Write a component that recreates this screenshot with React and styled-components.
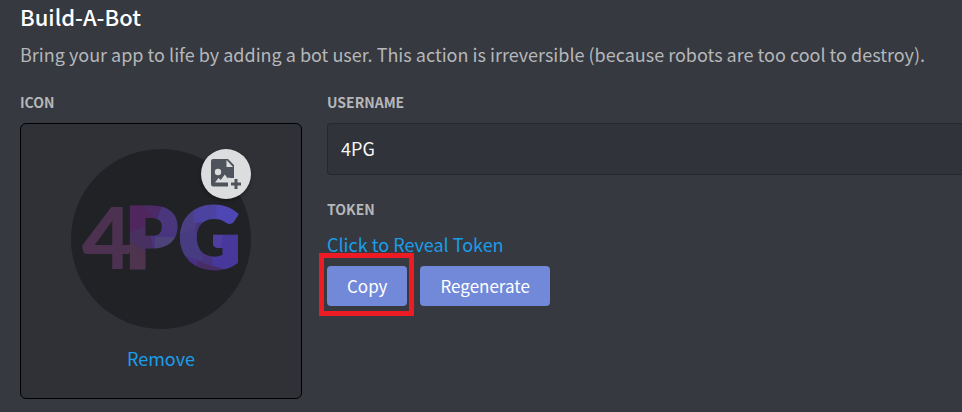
import React from "react";
import styled, { createGlobalStyle } from "styled-components";

const GlobalStyle = createGlobalStyle`
  *, *::before, *::after { box-sizing: border-box; }
  body {
    margin: 0;
    background: #36393f;
    color: #fff;
    font-family: "Noto Sans CJK SC", "Noto Sans", sans-serif;
    font-size: 18px;
    line-height: 24px;
  }
`;

const Page = styled.main`
  padding: 3px 0 12px 20px;
  overflow: hidden;
`;

const Title = styled.h1`
  margin: 0;
  font-size: 22px;
  font-weight: 500;
  line-height: 26px;
`;

const Description = styled.p`
  margin: 13px 0 28px;
  color: #b5b7ba;
  white-space: nowrap;
`;

const Columns = styled.div`
  display: grid;
  grid-template-columns: 282px 1fr;
  column-gap: 25px;
`;

const Label = styled.label`
  display: block;
  margin-bottom: 12px;
  color: #b5b7ba;
  font-size: 14px;
  font-weight: 700;
  line-height: 17px;
  text-transform: uppercase;
`;

const IconCard = styled.div`
  display: flex;
  flex-direction: column;
  align-items: center;
  gap: 17px;
  padding: 25px 0 28px;
  border: 1px solid #000;
  border-radius: 6px;
  background: #303136;
`;

const Avatar = styled.div`
  position: relative;
  width: 180px;
  height: 180px;
  border-radius: 50%;
  background: #212225;

  > svg { display: block; }
`;

const UploadButton = styled.button`
  position: absolute;
  top: 0;
  right: 0;
  width: 50px;
  height: 50px;
  padding: 0;
  border: 0;
  border-radius: 50%;
  background: #dcddde;
  box-shadow: 0 2px 4px rgba(0, 0, 0, 0.3);
  cursor: pointer;

  svg { display: block; }
`;

const TextLink = styled.a`
  color: #1b9de9;
  text-decoration: none;
`;

const TextInput = styled.input`
  display: block;
  width: 100%;
  height: 52px;
  margin-bottom: 26px;
  padding: 0 13px 2px;
  border: 1px solid #26282c;
  border-right: 0;
  border-radius: 4px 0 0 4px;
  background: #303339;
  color: #f6f6f7;
  font: inherit;
  outline: none;
`;

const TokenRow = styled.div`
  display: flex;
  padding-top: 2px;
`;

const Actions = styled.div`
  display: flex;
  gap: 13px;
  margin-top: 10px;
`;

const Button = styled.button`
  height: 40px;
  padding: 0 20px;
  border: 0;
  border-radius: 4px;
  background: #7289da;
  color: #fff;
  font: inherit;
  font-size: 17px;
  cursor: pointer;
`;

const Highlight = styled.div`
  position: relative;
  display: flex;

  &::after {
    content: "";
    position: absolute;
    inset: -13px -7px -10px -8px;
    border: 5px solid #ed1c24;
    pointer-events: none;
  }
`;

const facets = [
  ["#4c3150", "0,50 57,50 57,130 0,130"],
  ["#50265f", "57,50 70,50 90,74 57,90"],
  ["#4b2a67", "68,50 98,50 88,76"],
  ["#49367c", "94,50 110,50 110,88 84,74"],
  ["#4d4378", "84,88 110,88 110,112 84,112"],
  ["#483060", "57,84 78,76 84,112 57,96"],
  ["#4f3450", "57,92 78,104 78,130 57,130"],
  ["#4b3e83", "109,50 128,50 124,82 109,92"],
  ["#4c42a0", "124,50 150,50 148,72 122,74"],
  ["#4e46b2", "146,50 172,50 172,84 145,68"],
  ["#473c82", "109,86 124,80 132,112 109,108"],
  ["#493083", "109,106 132,112 140,134 109,134"],
  ["#48389c", "138,84 172,84 172,130 142,118"],
  ["#472d66", "126,112 172,126 172,134 126,134"],
  ["#4f3e9f", "134,84 152,84 150,106 134,98"],
];

const Logo = () => (
  <svg width="180" height="180" viewBox="0 0 180 180" role="img" aria-label="4PG">
    <defs>
      <mask id="logo-text" maskUnits="userSpaceOnUse" x="0" y="0" width="180" height="180">
        <g fill="#fff" stroke="#fff" fontFamily="Lato" fontWeight="900">
          <text x="11" y="120" fontSize="86" strokeWidth="0">4</text>
          <text x="54" y="119" fontSize="84" strokeWidth="3">P</text>
          <text x="108" y="119" fontSize="84" strokeWidth="4">G</text>
        </g>
      </mask>
    </defs>
    <g mask="url(#logo-text)">
      <rect width="180" height="180" fill="#49357f" />
      {facets.map(([fill, points]) => (
        <polygon key={points} fill={fill} points={points} />
      ))}
    </g>
  </svg>
);

const ImageAddIcon = () => (
  <svg width="50" height="50" viewBox="0 0 50 50" aria-hidden="true">
    <path
      fill="#4f545c"
      d="M12 10h15l6 6v13h-4v4h-2v4.500H12.500a2.500 2.500 0 0 1-2.500-2.500V12a2 2 0 0 1 2-2z"
    />
    <g fill="#dcddde">
      <path d="M25.500 11v7h6.500z" />
      <circle cx="17" cy="23" r="3.200" />
      <path d="M14 33.500l3.500-4.500 2.300 2 4-5.500 3 4 1.200-1.500 1.500 2.500v3z" />
    </g>
    <path fill="#4f545c" d="M33.500 30h3v3.500H40v3h-3.500V40h-3v-3.500H30v-3h3.500z" />
  </svg>
);

export default function App() {
  return (
    <>
      <GlobalStyle />
      <Page>
        <Title>Build-A-Bot</Title>
        <Description>
          Bring your app to life by adding a bot user. This action is irreversible (because robots are too cool to destroy).
        </Description>
        <Columns>
          <section>
            <Label as="div">Icon</Label>
            <IconCard>
              <Avatar>
                <Logo />
                <UploadButton type="button" aria-label="Upload icon"><ImageAddIcon /></UploadButton>
              </Avatar>
              <TextLink href="#remove">Remove</TextLink>
            </IconCard>
          </section>
          <section>
            <Label htmlFor="username">Username</Label>
            <TextInput id="username" type="text" defaultValue="4PG" />
            <Label as="div">Token</Label>
            <TokenRow>
              <TextLink href="#token">Click to Reveal Token</TextLink>
            </TokenRow>
            <Actions>
              <Highlight><Button type="button">Copy</Button></Highlight>
              <Button type="button">Regenerate</Button>
            </Actions>
          </section>
        </Columns>
      </Page>
    </>
  );
}
